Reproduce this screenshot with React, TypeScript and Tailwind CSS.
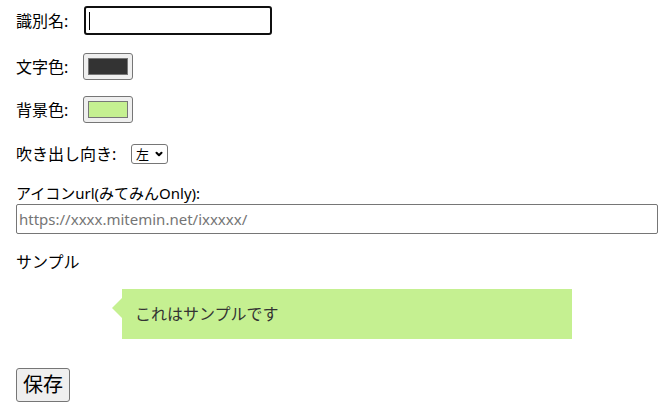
import { ChevronDown } from 'lucide-react'

const font = { fontFamily: '"Noto Sans", "Noto Sans CJK JP", sans-serif' }

function ColorSwatch({ color }: { color: string }) {
  return (
    <div className="flex h-[27px] w-[50px] items-center justify-center rounded-[3px] border border-[#767676] bg-[#efefef]">
      <div className="h-[17px] w-[40px] border border-[#777777]" style={{ backgroundColor: color }} />
    </div>
  )
}

export default function App() {
  return (
    <div className="flex flex-col px-4 text-[16px] text-black" style={font}>
      {/* 識別名 */}
      <div className="mt-[6px] flex h-[29px] items-center">
        <span className="w-[68px]">識別名:</span>
        <div className="relative h-[29px] w-[188px] rounded-[3px] border-2 border-[#101010] bg-white">
          <span className="absolute left-[3px] top-[4px] h-[18px] w-px bg-black" />
        </div>
      </div>

      {/* 文字色 */}
      <div className="mt-[18px] flex h-[27px] items-center">
        <span className="w-[67px]">文字色:</span>
        <ColorSwatch color="#333333" />
      </div>

      {/* 背景色 */}
      <div className="mt-[16px] flex h-[27px] items-center">
        <span className="w-[67px]">背景色:</span>
        <ColorSwatch color="#c5f091" />
      </div>

      {/* 吹き出し向き */}
      <div className="mt-[21px] flex h-[20px] items-center">
        <span className="w-[115px]">吹き出し向き:</span>
        <div className="flex h-[20px] w-[37px] items-center justify-between rounded-[3px] border border-[#767676] bg-white pl-[4px] pr-[3px] text-[13px] leading-none">
          <span>左</span>
          <ChevronDown className="h-[10px] w-[10px]" strokeWidth={5} />
        </div>
      </div>

      {/* アイコンurl */}
      <div className="mt-[19px] h-[20px] text-[15px] leading-[20px]">アイコンurl(みてみんOnly):</div>
      <div className="mt-px flex h-[30px] w-[642px] items-center rounded-[2px] border border-[#767676] px-[2px] text-[15px] text-[#757575]">
        https://xxxx.mitemin.net/ixxxxx/
      </div>

      {/* サンプル */}
      <div className="mt-[18px] h-[20px] leading-[20px]">サンプル</div>

      <div className="mt-[17px] flex pl-[106px]">
        <div className="relative flex h-[50px] w-[450px] items-center bg-[#c5f091] px-[13px] text-[#333333]">
          <span className="absolute left-[-10px] top-[9px] h-0 w-0 border-y-[10px] border-r-[10px] border-y-transparent border-r-[#c5f091]" />
          これはサンプルです
        </div>
      </div>

      <div className="mt-[29px]">
        <button className="h-[34px] w-[54px] rounded-[3px] border border-[#767676] bg-[#efefef] text-[20px] leading-none">
          保存
        </button>
      </div>
    </div>
  )
}
